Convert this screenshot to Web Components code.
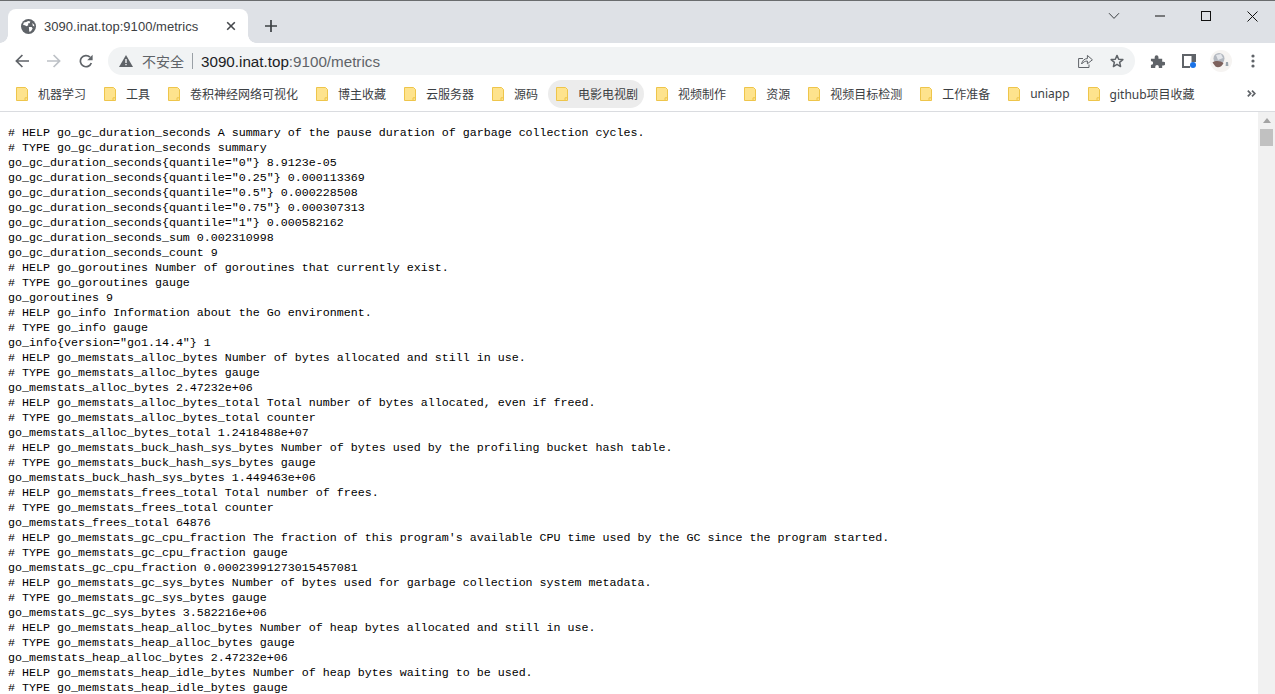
<!DOCTYPE html>
<html>
<head>
<meta charset="utf-8">
<style>
  html, body { margin: 0; height: 100%; overflow: hidden; background: #fff; }
  body { display: flex; flex-direction: column; height: 694px; }
</style>
</head>
<body>
<browser-tabstrip title="3090.inat.top:9100/metrics"></browser-tabstrip>
<browser-toolbar host-part="3090.inat.top" path-part=":9100/metrics"></browser-toolbar>
<browser-bookmarks></browser-bookmarks>
<browser-page></browser-page>

<script>
const UI_FONT = `"Liberation Sans", "Noto Sans CJK SC", sans-serif`;

class BrowserTabstrip extends HTMLElement {
  constructor() {
    super();
    const shadow = this.attachShadow({ mode: 'open' });
    shadow.innerHTML = `
      <style>
        :host { display: flex; height: 43px; box-sizing: border-box; background: #dee1e6; border-top: 1px solid #6a6c6e; font-family: ${UI_FONT}; flex: none; }
        .tab { width: 240px; margin: 8px 0 0 8px; height: 34px; background: #fff; border-radius: 8px 8px 0 0; display: flex; align-items: center; padding: 0 0 0 13px; box-sizing: border-box; position: relative; }
        .tab::before, .tab::after { content: ''; position: absolute; bottom: 0; width: 8px; height: 8px; background: radial-gradient(circle at 0 0, transparent 7.5px, #fff 8px); }
        .tab::before { left: -8px; }
        .tab::after { right: -8px; background: radial-gradient(circle at 100% 0, transparent 7.5px, #fff 8px); }
        .title { font-size: 13px; letter-spacing: .04px; color: #3c4043; margin-left: 8px; flex: 1; white-space: nowrap; }
        .close { margin-right: 12px; display: flex; }
        .new { margin: 8px 0 0 17px; height: 34px; display: flex; align-items: center; }
        .spacer { flex: 1; }
        .win { display: flex; align-items: flex-start; }
        .win svg { display: block; }
        .win span { width: 46px; height: 30px; display: flex; align-items: center; justify-content: center; }
      </style>
      <div class="tab">
        <svg width="15" height="15" viewBox="0 0 16 16"><circle cx="8" cy="8" r="8" fill="#5f6368"/><path d="M3 3.6 5.6 3.2 7.6 2 10 2.6 9.2 4.4 7.4 4.8 7.8 6.6 5.8 7.6 4.2 6.6 2.2 6.4ZM8.4 8.4 11.4 8.6 12.4 10.2 10.6 13 8.8 13.6 8.6 11ZM12 4.2 14 6 14.2 8 12.6 7.2Z" fill="#fff"/></svg>
        <span class="title"></span>
        <span class="close"><svg width="10" height="10" viewBox="0 0 10 10"><path d="M1.2 1.2 8.8 8.8M8.8 1.2 1.2 8.8" stroke="#45484c" stroke-width="1.6" fill="none"/></svg></span>
      </div>
      <span class="new"><svg width="12" height="12" viewBox="0 0 12 12"><path d="M6 0V12M0 6H12" stroke="#3c4043" stroke-width="1.7" fill="none"/></svg></span>
      <span class="spacer"></span>
      <div class="win">
        <span><svg width="12" height="8" viewBox="0 0 12 8"><path d="M1 1.2 6 6.4 11 1.2" stroke="#3c4043" stroke-width="1" fill="none"/></svg></span>
        <span><svg width="10" height="2" viewBox="0 0 10 2"><path d="M0 1H10" stroke="#111" stroke-width="1"/></svg></span>
        <span><svg width="10" height="10" viewBox="0 0 10 10"><rect x=".5" y=".5" width="9" height="9" fill="none" stroke="#111"/></svg></span>
        <span><svg width="11" height="11" viewBox="0 0 11 11"><path d="M.5 .5 10.5 10.5M10.5 .5 .5 10.5" stroke="#111" stroke-width="1" fill="none"/></svg></span>
      </div>`;
  }
  connectedCallback() {
    this.shadowRoot.querySelector('.title').textContent = this.getAttribute('title');
  }
}

class BrowserToolbar extends HTMLElement {
  constructor() {
    super();
    const shadow = this.attachShadow({ mode: 'open' });
    shadow.innerHTML = `
      <style>
        :host { display: flex; align-items: center; height: 36px; background: #fff; font-family: ${UI_FONT}; padding: 0 20px 0 15px; flex: none; }
        svg { display: block; flex: none; }
        .nav { display: flex; align-items: center; gap: 18px; }
        .omni { flex: 1; margin-left: 15px; height: 28px; background: #f1f3f4; border-radius: 14px; display: flex; align-items: center; padding: 0 11px 0 11px; }
        .warn { font-size: 14px; color: #5f6368; margin-left: 9px; }
        .sep { width: 1px; height: 16px; background: #9aa0a6; margin: 0 8px 0 8px; }
        .url { font-size: 15.2px; color: #5f6368; flex: 1; white-space: nowrap; }
        .host { color: #202124; }
        .right { display: flex; align-items: center; gap: 17px; }
        .tools { display: flex; align-items: center; margin-left: 15px; }
        .puzzle { margin-right: 17px; }
        .panel { margin-right: 14px; }
        .avatar { margin-right: 19px; }
      </style>
      <div class="nav">
        <svg width="14" height="14" viewBox="0 0 14 14"><path d="M14 7H1.4M7.4 1 1.4 7 7.4 13" stroke="#5f6368" stroke-width="1.7" fill="none"/></svg>
        <svg width="14" height="14" viewBox="0 0 14 14"><path d="M0 7H12.6M6.6 1 12.6 7 6.6 13" stroke="#bdc1c6" stroke-width="1.7" fill="none"/></svg>
        <svg width="14" height="14" viewBox="0 0 14 14"><path d="M12.3 9A5.6 5.6 0 1 1 11 3.2" stroke="#5f6368" stroke-width="1.7" fill="none"/><path d="M13.6 .8V6.2H8.2Z" fill="#5f6368"/></svg>
      </div>
      <div class="omni">
        <svg width="14" height="12" viewBox="0 0 14 12"><path d="M7 0 14 12H0Z" fill="#5f6368"/><path d="M6.3 4H7.7V8H6.3ZM6.3 8.9H7.7V10.3H6.3Z" fill="#f1f3f4"/></svg>
        <span class="warn">不安全</span>
        <span class="sep"></span>
        <span class="url"><span class="host"></span><span class="path"></span></span>
        <div class="right">
          <svg width="15" height="14" viewBox="0 0 15 14"><path d="M5 4.5H.6V13.5H11V10.5" stroke="#5f6368" stroke-width="1" fill="none"/><path d="M3.6 10C4 6.6 6.6 4.6 9.4 4.6V1.4L14.4 5.8 9.4 9.8V7C7.2 7 5.2 8 3.6 10Z" stroke="#5f6368" stroke-width="1" fill="none" stroke-linejoin="round"/></svg>
          <svg width="14" height="14" viewBox="0 0 16 16"><path d="M8 1.6 9.9 6 14.7 6.4 11 9.6 12.1 14.3 8 11.8 3.9 14.3 5 9.6 1.3 6.4 6.1 6Z" stroke="#5f6368" stroke-width="1.7" fill="none" stroke-linejoin="round"/></svg>
        </div>
      </div>
      <div class="tools">
        <svg class="puzzle" width="15" height="15" viewBox="0 0 16 16"><path d="M1 5H5V3.2A2 2 0 0 1 9 3.2V5H13V8.2H14.4A2 2 0 0 1 14.4 12.2H13V15H9.4V13.6A1.9 1.9 0 0 0 5.6 13.6V15H1V11.4H2.2A2 2 0 0 0 2.2 7.8H1Z" fill="#5f6368"/></svg>
        <svg class="panel" width="14" height="14" viewBox="0 0 14 14"><path d="M0 0H14V8H8V14H0Z" fill="#5f6368"/><rect x="2" y="2" width="7.5" height="10" fill="#fff"/><circle cx="11" cy="11" r="3" fill="#1a73e8"/></svg>
        <svg class="avatar" width="22" height="22" viewBox="0 0 22 22"><circle cx="11" cy="11" r="11" fill="#f6f4f2"/><circle cx="9" cy="8.5" r="5.5" fill="#b3b8c0"/><path d="M6 5 11 4 13 8 8 10Z" fill="#e4e6ea"/><path d="M2.5 12.5C6 10 11 11 13.5 13 12 17 8 18 5.5 16.5Z" fill="#7d615c"/><path d="M16 12 18 12 18.4 16 15.6 16Z" fill="#9aa5ad"/></svg>
        <svg width="4" height="14" viewBox="0 0 4 14"><circle cx="2" cy="2" r="1.6" fill="#5f6368"/><circle cx="2" cy="7" r="1.6" fill="#5f6368"/><circle cx="2" cy="12" r="1.6" fill="#5f6368"/></svg>
      </div>`;
  }
  connectedCallback() {
    this.shadowRoot.querySelector('.host').textContent = this.getAttribute('host-part');
    this.shadowRoot.querySelector('.path').textContent = this.getAttribute('path-part');
  }
}

class BookmarkItem extends HTMLElement {
  constructor() {
    super();
    const shadow = this.attachShadow({ mode: 'open' });
    shadow.innerHTML = `
      <style>
        :host { display: flex; align-items: center; height: 28px; padding: 0 6px 0 8px; margin-right: 4px; border-radius: 14px; flex: none; }
        :host([active]) { background: #ececec; }
        svg { display: block; margin-right: 10px; }
        span { font-size: 12px; color: #3c4043; white-space: nowrap; }
      </style>
      <svg width="12" height="14" viewBox="0 0 12 14"><path d="M.5 .5H9.5L11.5 2.5V13.5H.5Z" fill="#fee38d" stroke="#eec54b"/><path d="M9 13V10.8H11" fill="none" stroke="#eec54b"/></svg>
      <span><slot></slot></span>`;
  }
}

class BrowserBookmarks extends HTMLElement {
  constructor() {
    super();
    const shadow = this.attachShadow({ mode: 'open' });
    shadow.innerHTML = `
      <style>
        :host { display: flex; align-items: center; height: 33px; box-sizing: border-box; background: #fff; border-bottom: 1px solid #dadce0; padding: 0 0 3px 8px; font-family: "Noto Sans", "Noto Sans CJK SC", sans-serif; flex: none; }
        .list { display: flex; align-items: center; flex: 1; }
        svg { margin-right: 19px; display: block; }
      </style>
      <div class="list"><slot></slot></div>
      <svg width="9" height="7" viewBox="0 0 9 7"><path d="M.8 .6 3.6 3.5 .8 6.4M5 .6 7.8 3.5 5 6.4" stroke="#5f6368" stroke-width="1.7" fill="none"/></svg>`;
    const names = ['机器学习', '工具', '卷积神经网络可视化', '博主收藏', '云服务器', '源码', '电影电视剧', '视频制作', '资源', '视频目标检测', '工作准备', 'uniapp', 'github项目收藏'];
    names.forEach((name) => {
      const item = document.createElement('bookmark-item');
      item.textContent = name;
      if (name === '电影电视剧') item.setAttribute('active', '');
      this.appendChild(item);
    });
  }
}

class BrowserPage extends HTMLElement {
  constructor() {
    super();
    const shadow = this.attachShadow({ mode: 'open' });
    shadow.innerHTML = `
      <style>
        :host { display: flex; flex: 1; min-height: 0; background: #fff; overflow: hidden; }
        pre { flex: 1; margin: 0; padding: 14px 0 0 8px; font: 11.667px/15px "Liberation Mono", monospace; color: #000; white-space: pre; overflow: hidden; }
        .bar { width: 17px; flex: none; background: #f1f1f1; display: flex; flex-direction: column; align-items: center; }
        .up { width: 0; height: 0; border: 4px solid transparent; border-top: 0; border-bottom: 5px solid #a3a3a3; margin: 6px 0 6px; }
        .thumb { width: 13px; height: 17px; background: #c1c1c1; }
      </style>
      <pre></pre>
      <div class="bar"><div class="up"></div><div class="thumb"></div></div>`;
  }
  connectedCallback() {
    this.shadowRoot.querySelector('pre').textContent = METRICS;
  }
}

const METRICS = `# HELP go_gc_duration_seconds A summary of the pause duration of garbage collection cycles.
# TYPE go_gc_duration_seconds summary
go_gc_duration_seconds{quantile="0"} 8.9123e-05
go_gc_duration_seconds{quantile="0.25"} 0.000113369
go_gc_duration_seconds{quantile="0.5"} 0.000228508
go_gc_duration_seconds{quantile="0.75"} 0.000307313
go_gc_duration_seconds{quantile="1"} 0.000582162
go_gc_duration_seconds_sum 0.002310998
go_gc_duration_seconds_count 9
# HELP go_goroutines Number of goroutines that currently exist.
# TYPE go_goroutines gauge
go_goroutines 9
# HELP go_info Information about the Go environment.
# TYPE go_info gauge
go_info{version="go1.14.4"} 1
# HELP go_memstats_alloc_bytes Number of bytes allocated and still in use.
# TYPE go_memstats_alloc_bytes gauge
go_memstats_alloc_bytes 2.47232e+06
# HELP go_memstats_alloc_bytes_total Total number of bytes allocated, even if freed.
# TYPE go_memstats_alloc_bytes_total counter
go_memstats_alloc_bytes_total 1.2418488e+07
# HELP go_memstats_buck_hash_sys_bytes Number of bytes used by the profiling bucket hash table.
# TYPE go_memstats_buck_hash_sys_bytes gauge
go_memstats_buck_hash_sys_bytes 1.449463e+06
# HELP go_memstats_frees_total Total number of frees.
# TYPE go_memstats_frees_total counter
go_memstats_frees_total 64876
# HELP go_memstats_gc_cpu_fraction The fraction of this program's available CPU time used by the GC since the program started.
# TYPE go_memstats_gc_cpu_fraction gauge
go_memstats_gc_cpu_fraction 0.00023991273015457081
# HELP go_memstats_gc_sys_bytes Number of bytes used for garbage collection system metadata.
# TYPE go_memstats_gc_sys_bytes gauge
go_memstats_gc_sys_bytes 3.582216e+06
# HELP go_memstats_heap_alloc_bytes Number of heap bytes allocated and still in use.
# TYPE go_memstats_heap_alloc_bytes gauge
go_memstats_heap_alloc_bytes 2.47232e+06
# HELP go_memstats_heap_idle_bytes Number of heap bytes waiting to be used.
# TYPE go_memstats_heap_idle_bytes gauge`;

customElements.define('browser-tabstrip', BrowserTabstrip);
customElements.define('browser-toolbar', BrowserToolbar);
customElements.define('bookmark-item', BookmarkItem);
customElements.define('browser-bookmarks', BrowserBookmarks);
customElements.define('browser-page', BrowserPage);
</script>
</body>
</html>
